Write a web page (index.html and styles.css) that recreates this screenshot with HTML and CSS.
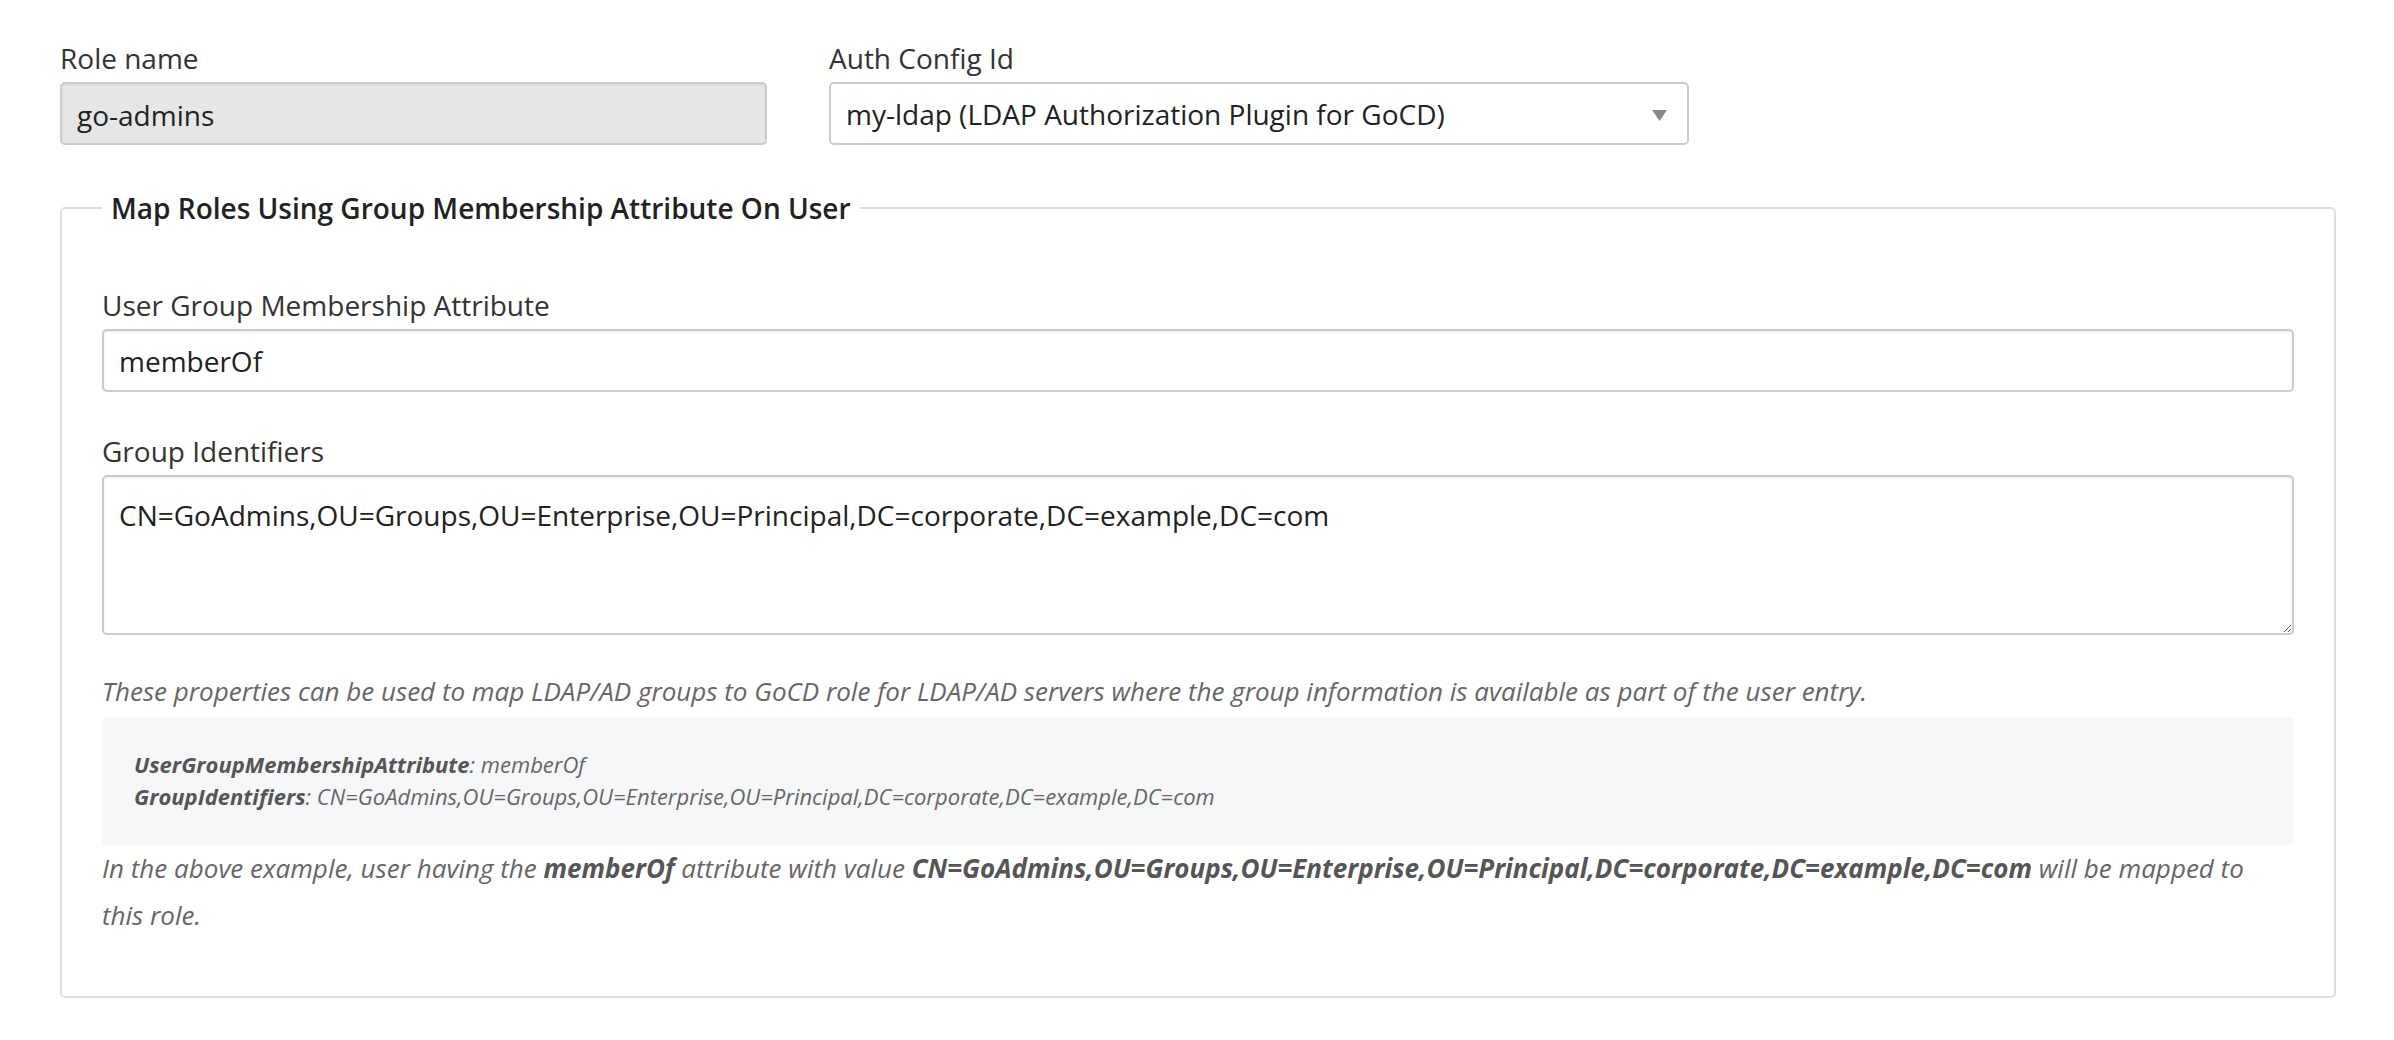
FILE: index.html
```html
<!DOCTYPE html>
<html lang="en">
<head>
<meta charset="utf-8">
<title>Role</title>
<link rel="stylesheet" href="styles.css">
</head>
<body>
<div class="page">
  <div class="top-row">
    <div class="group role-group">
      <label class="label" for="role">Role name</label>
      <input id="role" class="input input-disabled" type="text" value="go-admins" disabled>
    </div>
    <div class="group auth-group">
      <label class="label" for="auth">Auth Config Id</label>
      <div class="select-wrap">
        <select id="auth" class="input select">
          <option>my-ldap (LDAP Authorization Plugin for GoCD)</option>
        </select>
        <svg class="select-arrow" width="15" height="11" viewBox="0 0 15 11" aria-hidden="true"><polygon points="0,0 15,0 7.5,11" fill="#888"/></svg>
      </div>
    </div>
  </div>

  <fieldset class="mapping">
    <legend class="legend">Map Roles Using Group Membership Attribute On User</legend>
    <div class="group">
      <label class="label" for="attr">User Group Membership Attribute</label>
      <input id="attr" class="input" type="text" value="memberOf">
    </div>
    <div class="group group-next">
      <label class="label" for="ids">Group Identifiers</label>
      <textarea id="ids" class="input textarea">CN=GoAdmins,OU=Groups,OU=Enterprise,OU=Principal,DC=corporate,DC=example,DC=com</textarea>
    </div>
    <p class="help">These properties can be used to map LDAP/AD groups to GoCD role for LDAP/AD servers where the group information is available as part of the user entry.</p>
    <div class="example">
      <div class="example-line"><b>UserGroupMembershipAttribute</b>: memberOf</div>
      <div class="example-line"><b>GroupIdentifiers</b>: CN=GoAdmins,OU=Groups,OU=Enterprise,OU=Principal,DC=corporate,DC=example,DC=com</div>
    </div>
    <p class="help help-note">In the above example, user having the <b>memberOf</b> attribute with value <b>CN=GoAdmins,OU=Groups,OU=Enterprise,OU=Principal,DC=corporate,DC=example,DC=com</b> will be mapped to this role.</p>
  </fieldset>
</div>
</body>
</html>
```

FILE: styles.css
```css
html, body {
  margin: 0;
  padding: 0;
  background: #fff;
}

body {
  font-family: "Open Sans", "Noto Sans", sans-serif;
  font-size: 28px;
  color: #333;
}

.page {
  padding: 37px 0 0 60px;
  width: 2276px;
}

.top-row {
  display: flex;
  gap: 62px;
}

.role-group {
  width: 707px;
}

.auth-group {
  width: 860px;
}

.group {
  display: flex;
  flex-direction: column;
}

.group-next {
  margin-top: 38px;
}

.label {
  display: block;
  line-height: 42px;
  margin-bottom: 3px;
  color: #333;
  font-weight: 400;
}

.input {
  box-sizing: border-box;
  width: 100%;
  height: 63px;
  margin: 0;
  padding: 0 15px;
  font-family: "Open Sans", "Noto Sans", sans-serif;
  font-size: 28px;
  color: #222;
  background: #fff;
  border: 2px solid #cbcbcb;
  border-radius: 5px;
  box-shadow: inset 0 1px 2px rgba(0, 0, 0, 0.08);
  outline: none;
}

.input-disabled {
  background: #e6e6e6;
  color: #222;
  -webkit-text-fill-color: #222;
  opacity: 1;
  padding-top: 2px;
}

.select-wrap {
  position: relative;
}

.select {
  -webkit-appearance: none;
  appearance: none;
  box-shadow: none;
  padding-right: 50px;
}

.select-arrow {
  position: absolute;
  right: 22px;
  top: 28px;
  pointer-events: none;
}

.textarea {
  height: 160px;
  padding: 17px 15px 12px 15px;
  line-height: 42px;
  resize: both;
  display: block;
}

.mapping {
  margin: 42px 0 0 0;
  padding: 55px 40px 57px 40px;
  border: 2px solid #dedede;
  border-radius: 5px;
  min-inline-size: 0;
}

.legend {
  padding: 0 9px;
  font-size: 28px;
  line-height: 42px;
  font-weight: 600;
  color: #222;
}

.help {
  margin: 0;
  font-size: 26px;
  font-style: italic;
  color: #666;
  line-height: 47px;
}

.help-note {
  padding-right: 24px;
}

.group-next + .help {
  margin-top: 33px;
}

.help b {
  font-weight: 700;
  color: #555;
}

.example {
  margin-top: 2px;
  background: #f6f7f9;
  border-radius: 5px;
  padding: 31px 32px 33px 32px;
  font-style: italic;
  font-size: 22px;
  line-height: 32px;
  color: #666;
}

.example b {
  font-weight: 700;
  color: #555;
}
```
